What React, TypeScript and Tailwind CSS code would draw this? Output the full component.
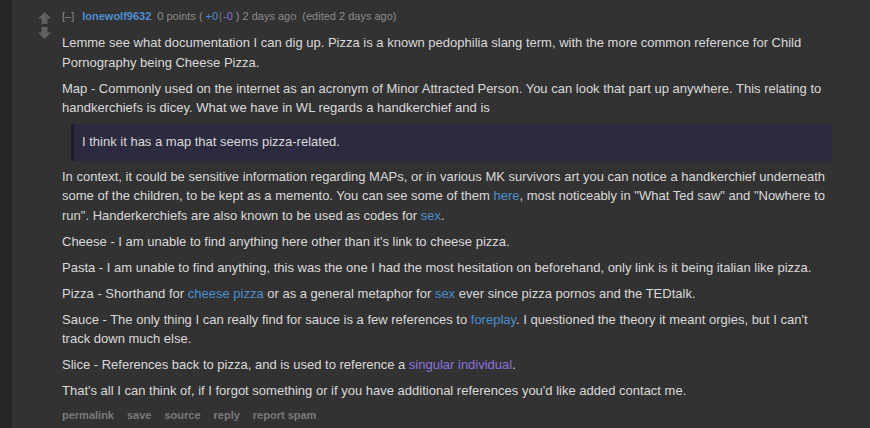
import React from "react";

const Link = ({ children, visited }: { children: React.ReactNode; visited?: boolean }) => (
  <span className={visited ? "text-[#8a72dc]" : "text-[#4b8fd0]"}>{children}</span>
);

export default function App() {
  return (
    <div
      className="flex w-[870px] h-[428px] overflow-hidden bg-[#323232] text-[#dadada]"
      style={{ fontFamily: '"Liberation Sans", Arial, sans-serif' }}
    >
      <div className="w-[12px] shrink-0 bg-[#262626]" />
      <div className="w-[50px] shrink-0 flex flex-col items-center pt-[12px] pl-[14px]">
        <svg width="13" height="12" viewBox="0 0 13 12" className="block">
          <polygon points="6.5,0 13,6.5 9.5,6.5 9.5,12 3.5,12 3.5,6.5 0,6.5" fill="#606060" />
        </svg>
        <svg width="13" height="12" viewBox="0 0 13 12" className="block mt-[3px]">
          <polygon points="3.5,0 9.5,0 9.5,5.5 13,5.5 6.5,12 0,5.5 3.5,5.5" fill="#606060" />
        </svg>
      </div>
      <div className="flex-1 pr-[38px]">
        <div className="mt-[9px] h-[15px] flex items-center text-[11px] text-[#8c8c8c] whitespace-nowrap">
          <span className="text-[#8a8a8a]">[–]</span>
          <span className="ml-[8px] font-bold text-[#4f8fd1]">lonewolf9632</span>
          <span className="ml-[6px]">0 points (</span>
          <span className="ml-[3px] text-[#4f8fd1]">+0</span>
          <span className="mx-[1px] text-[#777]">|</span>
          <span className="text-[#8a72dc]">-0</span>
          <span className="ml-[3px]">) 2 days ago</span>
          <span className="ml-[6px]">(edited 2 days ago)</span>
        </div>
        <div className="mt-[9px] text-[13px] leading-[19.5px]">
          <p>
            Lemme see what documentation I can dig up. Pizza is a known pedophilia slang term, with the more
            common reference for Child Pornography being Cheese Pizza.
          </p>
          <p className="mt-[6.5px]">
            Map - Commonly used on the internet as an acronym of Minor Attracted Person. You can look that part
            up anywhere. This relating to handkerchiefs is dicey. What we have in WL regards a handkerchief and is
          </p>
          <div className="mt-[6px] ml-[9px] h-[37px] flex items-center border-l-[3px] border-[#1e1c2c] bg-[#2c2a3e] pl-[8px]">
            I think it has a map that seems pizza-related.
          </div>
          <p className="mt-[6px]">
            In context, it could be sensitive information regarding MAPs, or in various MK survivors art you can
            notice a handkerchief underneath some of the children, to be kept as a memento. You can see some of
            them <Link>here</Link>, most noticeably in "What Ted saw" and "Nowhere to run". Handerkerchiefs are
            also known to be used as codes for <Link>sex</Link>.
          </p>
          <p className="mt-[6.5px]">Cheese - I am unable to find anything here other than it's link to cheese pizza.</p>
          <p className="mt-[6.5px]">
            Pasta - I am unable to find anything, this was the one I had the most hesitation on beforehand, only
            link is it being italian like pizza.
          </p>
          <p className="mt-[6.5px]">
            Pizza - Shorthand for <Link>cheese pizza</Link> or as a general metaphor for <Link>sex</Link> ever
            since pizza pornos and the TEDtalk.
          </p>
          <p className="mt-[6.5px]">
            Sauce - The only thing I can really find for sauce is a few references to <Link>foreplay</Link>. I
            questioned the theory it meant orgies, but I can't track down much else.
          </p>
          <p className="mt-[6.5px]">
            Slice - References back to pizza, and is used to reference a <Link visited>singular individual</Link>.
          </p>
          <p className="mt-[6.5px]">
            That's all I can think of, if I forgot something or if you have additional references you'd like added
            contact me.
          </p>
        </div>
        <div className="mt-[6px] flex gap-[13px] text-[11px] font-bold text-[#7a7a7a]">
          <span>permalink</span>
          <span>save</span>
          <span>source</span>
          <span>reply</span>
          <span>report spam</span>
        </div>
      </div>
    </div>
  );
}
